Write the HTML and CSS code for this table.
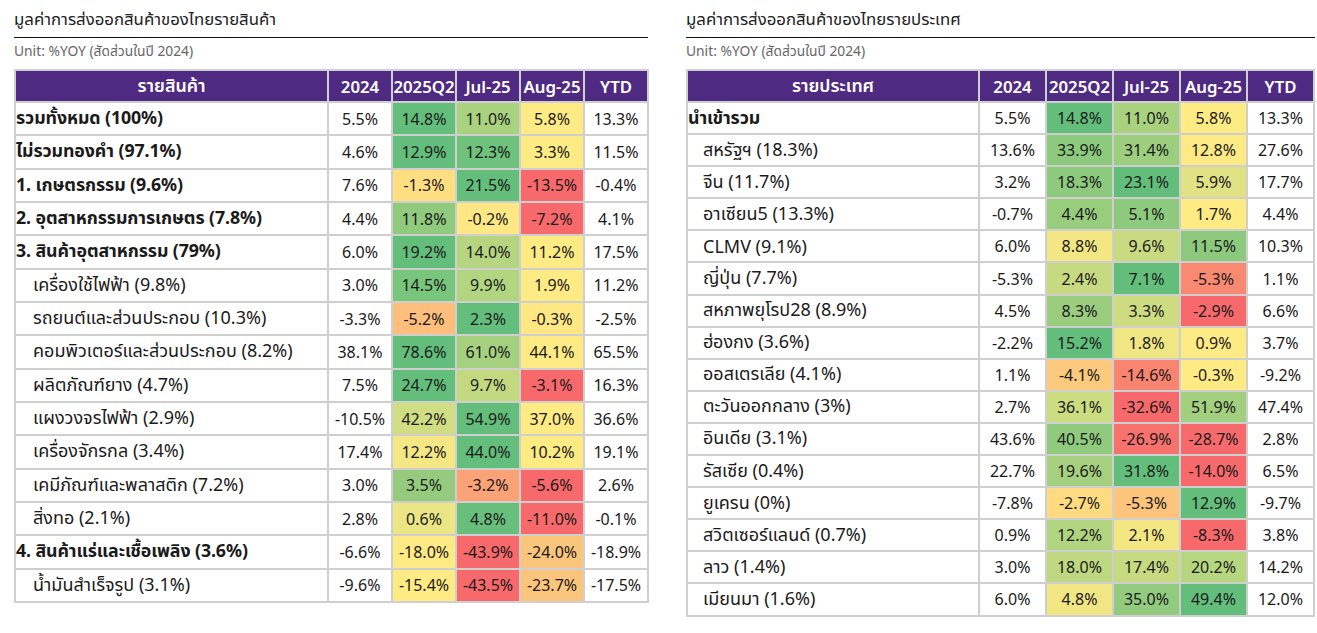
FILE: index.html
```html
<!DOCTYPE html>
<html lang="th">
<head>
<meta charset="utf-8">
<title>มูลค่าการส่งออกสินค้าของไทย</title>
<link rel="stylesheet" href="styles.css">
</head>
<body>
<div class="page">
  <section class="panel panel-left">
    <h2 class="title">มูลค่าการส่งออกสินค้าของไทยรายสินค้า</h2>
    <div class="unit">Unit: %YOY (สัดส่วนในปี 2024)</div>
    <table class="grid grid-left">
      <colgroup><col class="c-label-l"><col class="c-num"><col class="c-num"><col class="c-num"><col class="c-num"><col class="c-num"></colgroup>
      <thead><tr><th class="th-lbl">รายสินค้า</th><th>2024</th><th>2025Q2</th><th>Jul-25</th><th>Aug-25</th><th>YTD</th></tr></thead>
      <tbody>
        <tr class="bold"><td class="lbl">รวมทั้งหมด (100%)</td><td>5.5%</td><td style="background:#63BE7B">14.8%</td><td style="background:#A9D27F">11.0%</td><td style="background:#FFEB84">5.8%</td><td>13.3%</td></tr>
        <tr class="bold"><td class="lbl">ไม่รวมทองคำ (97.1%)</td><td>4.6%</td><td style="background:#63BE7B">12.9%</td><td style="background:#6FC27C">12.3%</td><td style="background:#FFEB84">3.3%</td><td>11.5%</td></tr>
        <tr class="bold"><td class="lbl">1. เกษตรกรรม (9.6%)</td><td>7.6%</td><td style="background:#FFDE82">-1.3%</td><td style="background:#63BE7B">21.5%</td><td style="background:#F8696B">-13.5%</td><td>-0.4%</td></tr>
        <tr class="bold"><td class="lbl">2. อุตสาหกรรมการเกษตร (7.8%)</td><td>4.4%</td><td style="background:#8FCA7D">11.8%</td><td style="background:#FFE884">-0.2%</td><td style="background:#F8696B">-7.2%</td><td>4.1%</td></tr>
        <tr class="bold"><td class="lbl">3. สินค้าอุตสาหกรรม (79%)</td><td>6.0%</td><td style="background:#63BE7B">19.2%</td><td style="background:#B5D580">14.0%</td><td style="background:#FFEB84">11.2%</td><td>17.5%</td></tr>
        <tr><td class="lbl sub">เครื่องใช้ไฟฟ้า (9.8%)</td><td>3.0%</td><td style="background:#78C57C">14.5%</td><td style="background:#B2D580">9.9%</td><td style="background:#FFEB84">1.9%</td><td>11.2%</td></tr>
        <tr><td class="lbl sub">รถยนต์และส่วนประกอบ (10.3%)</td><td>-3.3%</td><td style="background:#FDBF7B">-5.2%</td><td style="background:#63BE7B">2.3%</td><td style="background:#FFE784">-0.3%</td><td>-2.5%</td></tr>
        <tr><td class="lbl sub">คอมพิวเตอร์และส่วนประกอบ (8.2%)</td><td>38.1%</td><td style="background:#63BE7B">78.6%</td><td style="background:#A5D07E">61.0%</td><td style="background:#FFEB84">44.1%</td><td>65.5%</td></tr>
        <tr><td class="lbl sub">ผลิตภัณฑ์ยาง (4.7%)</td><td>7.5%</td><td style="background:#63BE7B">24.7%</td><td style="background:#C3D980">9.7%</td><td style="background:#F8696B">-3.1%</td><td>16.3%</td></tr>
        <tr><td class="lbl sub">แผงวงจรไฟฟ้า (2.9%)</td><td>-10.5%</td><td style="background:#D0DD82">42.2%</td><td style="background:#63BE7B">54.9%</td><td style="background:#FFEB84">37.0%</td><td>36.6%</td></tr>
        <tr><td class="lbl sub">เครื่องจักรกล (3.4%)</td><td>17.4%</td><td style="background:#F5E884">12.2%</td><td style="background:#63BE7B">44.0%</td><td style="background:#FFEB84">10.2%</td><td>19.1%</td></tr>
        <tr><td class="lbl sub">เคมีภัณฑ์และพลาสติก (7.2%)</td><td>3.0%</td><td style="background:#96CB7D">3.5%</td><td style="background:#FBA276">-3.2%</td><td style="background:#F8696B">-5.6%</td><td>2.6%</td></tr>
        <tr><td class="lbl sub">สิ่งทอ (2.1%)</td><td>2.8%</td><td style="background:#EBE583">0.6%</td><td style="background:#68BF7B">4.8%</td><td style="background:#F8696B">-11.0%</td><td>-0.1%</td></tr>
        <tr class="bold"><td class="lbl">4. สินค้าแร่และเชื้อเพลิง (3.6%)</td><td>-6.6%</td><td style="background:#FFEA84">-18.0%</td><td style="background:#F8696B">-43.9%</td><td style="background:#FCC57C">-24.0%</td><td>-18.9%</td></tr>
        <tr><td class="lbl sub">น้ำมันสำเร็จรูป (3.1%)</td><td>-9.6%</td><td style="background:#FFEB84">-15.4%</td><td style="background:#F8696B">-43.5%</td><td style="background:#FCC57C">-23.7%</td><td>-17.5%</td></tr>
      </tbody>
    </table>
  </section>
  <section class="panel panel-right">
    <h2 class="title">มูลค่าการส่งออกสินค้าของไทยรายประเทศ</h2>
    <div class="unit">Unit: %YOY (สัดส่วนในปี 2024)</div>
    <table class="grid grid-right">
      <colgroup><col class="c-label-r"><col class="c-num-r"><col class="c-num-r"><col class="c-num-r"><col class="c-num-r"><col class="c-num-r"></colgroup>
      <thead><tr><th class="th-lbl">รายประเทศ</th><th>2024</th><th>2025Q2</th><th>Jul-25</th><th>Aug-25</th><th>YTD</th></tr></thead>
      <tbody>
        <tr class="bold"><td class="lbl">นำเข้ารวม</td><td>5.5%</td><td style="background:#63BE7B">14.8%</td><td style="background:#A9D27F">11.0%</td><td style="background:#FFEB84">5.8%</td><td>13.3%</td></tr>
        <tr><td class="lbl sub">สหรัฐฯ (18.3%)</td><td>13.6%</td><td style="background:#8DCA7D">33.9%</td><td style="background:#9CCE7E">31.4%</td><td style="background:#FEEA84">12.8%</td><td>27.6%</td></tr>
        <tr><td class="lbl sub">จีน (11.7%)</td><td>3.2%</td><td style="background:#8ECA7D">18.3%</td><td style="background:#63BE7B">23.1%</td><td style="background:#E0E283">5.9%</td><td>17.7%</td></tr>
        <tr><td class="lbl sub">อาเซียน5 (13.3%)</td><td>-0.7%</td><td style="background:#98CD7E">4.4%</td><td style="background:#8DCA7D">5.1%</td><td style="background:#FFEB84">1.7%</td><td>4.4%</td></tr>
        <tr><td class="lbl sub">CLMV (9.1%)</td><td>6.0%</td><td style="background:#F2E783">8.8%</td><td style="background:#C8DB81">9.6%</td><td style="background:#8CC97D">11.5%</td><td>10.3%</td></tr>
        <tr><td class="lbl sub">ญี่ปุ่น (7.7%)</td><td>-5.3%</td><td style="background:#C7DA81">2.4%</td><td style="background:#63BE7B">7.1%</td><td style="background:#F98A71">-5.3%</td><td>1.1%</td></tr>
        <tr><td class="lbl sub">สหภาพยุโรป28 (8.9%)</td><td>4.5%</td><td style="background:#9ACD7E">8.3%</td><td style="background:#CEDC81">3.3%</td><td style="background:#F8696B">-2.9%</td><td>6.6%</td></tr>
        <tr><td class="lbl sub">ฮ่องกง (3.6%)</td><td>-2.2%</td><td style="background:#63BE7B">15.2%</td><td style="background:#F0E683">1.8%</td><td style="background:#FFEB84">0.9%</td><td>3.7%</td></tr>
        <tr><td class="lbl sub">ออสเตรเลีย (4.1%)</td><td>1.1%</td><td style="background:#FDC97D">-4.1%</td><td style="background:#F98470">-14.6%</td><td style="background:#FFEB84">-0.3%</td><td>-9.2%</td></tr>
        <tr><td class="lbl sub">ตะวันออกกลาง (3%)</td><td>2.7%</td><td style="background:#CBDC81">36.1%</td><td style="background:#F8696B">-32.6%</td><td style="background:#A3D07F">51.9%</td><td>47.4%</td></tr>
        <tr><td class="lbl sub">อินเดีย (3.1%)</td><td>43.6%</td><td style="background:#8FCA7D">40.5%</td><td style="background:#F8726D">-26.9%</td><td style="background:#F8696B">-28.7%</td><td>2.8%</td></tr>
        <tr><td class="lbl sub">รัสเซีย (0.4%)</td><td>22.7%</td><td style="background:#A5D07F">19.6%</td><td style="background:#63BE7B">31.8%</td><td style="background:#F8696B">-14.0%</td><td>6.5%</td></tr>
        <tr><td class="lbl sub">ยูเครน (0%)</td><td>-7.8%</td><td style="background:#FEDB81">-2.7%</td><td style="background:#FDC47C">-5.3%</td><td style="background:#63BE7B">12.9%</td><td>-9.7%</td></tr>
        <tr><td class="lbl sub">สวิตเซอร์แลนด์ (0.7%)</td><td>0.9%</td><td style="background:#B0D47F">12.2%</td><td style="background:#F3E783">2.1%</td><td style="background:#F8696B">-8.3%</td><td>3.8%</td></tr>
        <tr><td class="lbl sub">ลาว (1.4%)</td><td>3.0%</td><td style="background:#BDD880">18.0%</td><td style="background:#C6DA81">17.4%</td><td style="background:#B6D680">20.2%</td><td>14.2%</td></tr>
        <tr><td class="lbl sub">เมียนมา (1.6%)</td><td>6.0%</td><td style="background:#F0E683">4.8%</td><td style="background:#92CB7D">35.0%</td><td style="background:#63BE7B">49.4%</td><td>12.0%</td></tr>
      </tbody>
    </table>
  </section>
</div>
</body>
</html>
```
FILE: styles.css
```css
* { box-sizing: border-box; }
html, body { margin: 0; padding: 0; background: #ffffff; }
body {
  font-family: "Noto Sans", "Noto Sans Thai", "Noto Sans Thai UI", sans-serif;
  color: #1a1a1a;
}
.page {
  display: flex;
  gap: 38px;
  padding: 0 0 0 14px;
}
.panel-left { width: 634px; }
.panel-right { width: 629px; }
.title {
  margin: 0;
  padding-top: 7px;
  height: 38px;
  font-size: 16.8px;
  font-weight: 400;
  line-height: 24px;
  color: #222;
  border-bottom: 1.5px solid #111;
}
.unit {
  height: 31px;
  padding-top: 3px;
  font-size: 13.8px;
  line-height: 20px;
  color: #666;
}
.grid {
  width: 100%;
  border-collapse: collapse;
  table-layout: fixed;
  border: 2px solid #cfcfcf;
}
.c-label-l { width: 313px; }
.c-num { width: 64px; }
.c-label-r { width: 292px; }
.c-num-r { width: 67px; }
.grid th {
  background: #4F2A83;
  color: #ffffff;
  font-weight: 600;
  font-size: 16.8px;
  height: 32px;
  padding: 0;
  border: 2px solid #cfcfcf;
  text-align: center;
  white-space: nowrap;
}
.grid th.th-lbl { font-size: 17.8px; }
.grid td {
  border: 2px solid #cfcfcf;
  padding: 0;
  text-align: center;
  font-size: 16px;
  color: #1a1a1a;
  white-space: nowrap;
}
.grid-left tbody tr { height: 33.33px; }
.grid-right tbody tr { height: 32.1px; }
.grid td.lbl {
  text-align: left;
  padding-left: 0;
  font-size: 18px;
}
.grid tr.bold td.lbl { font-weight: 700; font-size: 17.8px; letter-spacing: -0.1px; }
.grid td.lbl.sub { padding-left: 17px; }
.grid-right td.lbl.sub { padding-left: 15px; }
```
